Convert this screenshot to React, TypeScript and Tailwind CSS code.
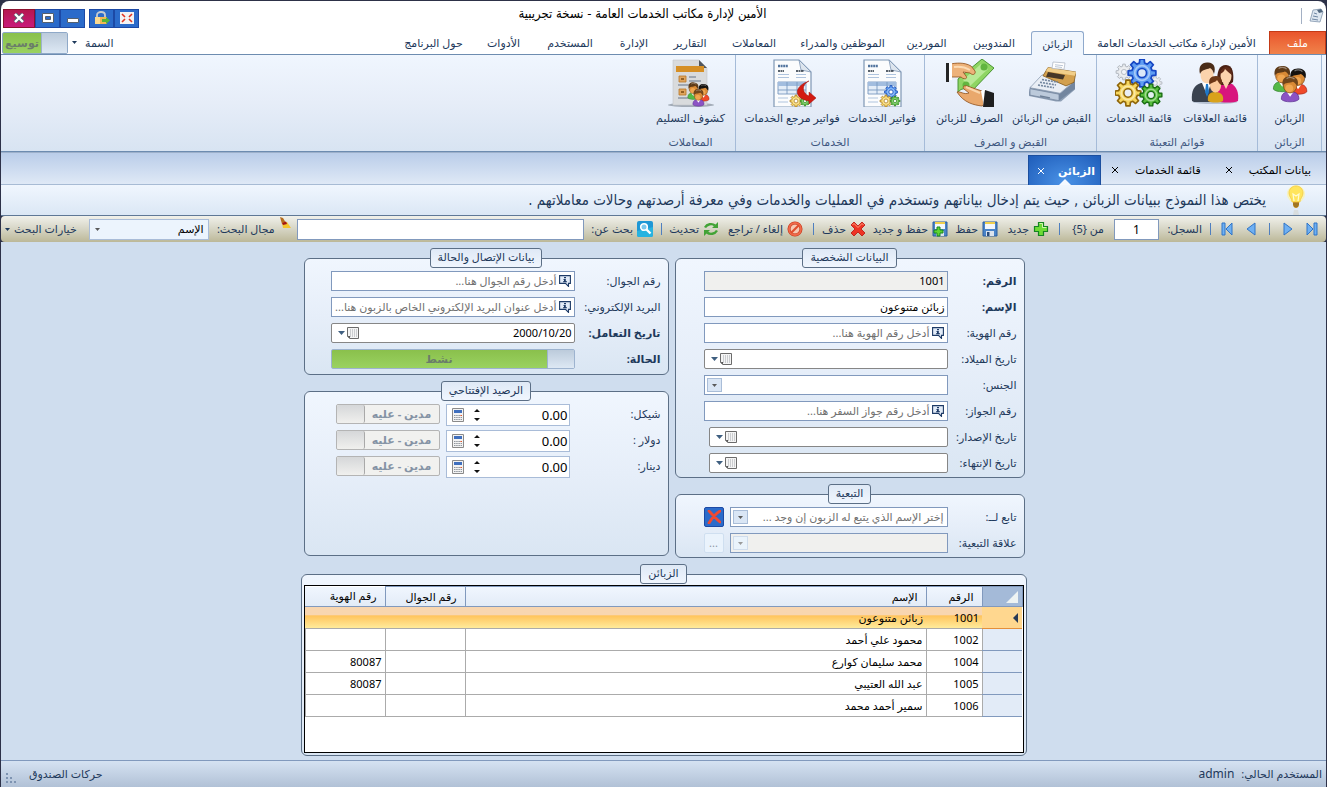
import { useState } from 'react';
import type { ReactNode } from 'react';

// --- Interfaces ---
interface RibbonTab {
  label: string;
  width: string;
}

interface RibbonAction {
  label: string;
  width: string;
  icon: ReactNode;
}

interface RibbonGroup {
  title: string;
  width: string;
  actions: RibbonAction[];
}

interface Customer {
  id: string;
  name: string;
  mobile: string;
  identity: string;
}

// --- Data ---
const ribbonTabs: RibbonTab[] = [
  { label: 'الأمين لإدارة مكاتب الخدمات العامة', width: 'w-[185px]' },
  { label: 'الزبائن', width: 'w-[53px]' },
  { label: 'المندوبين', width: 'w-[74px]' },
  { label: 'الموردين', width: 'w-[61px]' },
  { label: 'الموظفين والمدراء', width: 'w-[107px]' },
  { label: 'المعاملات', width: 'w-[70px]' },
  { label: 'التقارير', width: 'w-[58px]' },
  { label: 'الإدارة', width: 'w-[54px]' },
  { label: 'المستخدم', width: 'w-[74px]' },
  { label: 'الأدوات', width: 'w-[59px]' },
  { label: 'حول البرنامج', width: 'w-[81px]' },
];

const customers: Customer[] = [
  { id: '1001', name: 'زبائن متنوعون', mobile: '', identity: '' },
  { id: '1002', name: 'محمود علي أحمد', mobile: '', identity: '' },
  { id: '1004', name: 'محمد سليمان كوارع', mobile: '', identity: '80087' },
  { id: '1005', name: 'عبد الله العتيبي', mobile: '', identity: '80087' },
  { id: '1006', name: 'سمير أحمد محمد', mobile: '', identity: '' },
];

// --- Icons ---
const gearPath = (cx: number, cy: number, r: number, teeth: number) => {
  const step = (Math.PI * 2) / teeth;
  const points: string[] = [];
  for (let i = 0; i < teeth; i++) {
    const a = i * step;
    [
      [-0.32, 0.74],
      [-0.2, 1],
      [0.2, 1],
      [0.32, 0.74],
    ].forEach(([offset, scale]) => {
      const t = a + offset * step;
      points.push(`${(cx + Math.cos(t) * r * scale).toFixed(2)} ${(cy + Math.sin(t) * r * scale).toFixed(2)}`);
    });
  }
  return `M${points.join('L')}Z`;
};

const Gear = ({ cx, cy, r, fill, stroke, hole }: { cx: number; cy: number; r: number; fill: string; stroke: string; hole: string }) => (
  <g>
    <path d={gearPath(cx, cy, r, 8)} fill={fill} stroke={stroke} strokeWidth={r / 8} strokeLinejoin="round" />
    <circle cx={cx} cy={cy} r={r * 0.52} fill="none" stroke="#fff" strokeOpacity="0.45" strokeWidth={r / 8} />
    <circle cx={cx} cy={cy} r={r * 0.32} fill={hole} stroke={stroke} strokeWidth={r / 9} />
  </g>
);

const Person = ({ x, y, hair, shirt, shade }: { x: number; y: number; hair: string; shirt: string; shade: string }) => (
  <g transform={`translate(${x} ${y})`}>
    <path d="M-10 20C-10 13-6 11 0 11S10 13 10 20C7 24-7 24-10 20Z" fill={shirt} stroke={shade} strokeWidth="0.8" />
    <path d="M-4 11L0 17L4 11Z" fill="#fff" />
    <ellipse cx="0" cy="4" rx="7.5" ry="8.5" fill="#d98a35" stroke="#7a4310" strokeWidth="0.8" />
    <ellipse cx="-1" cy="7" rx="4.5" ry="4.5" fill="#f0a650" />
    <path d="M-8.500 4C-10-5-5-8 1-7.500C8-7 10-2 8.500 4C6 2 5-1 3-1C0 1-6-1-8.500 4Z" fill={hair} />
    <path d="M-4-4.500C-2-6.500 3-6.500 5-4" stroke="#fff" strokeOpacity="0.4" strokeWidth="1.400" fill="none" />
  </g>
);

const People = () => (
  <g>
    <Person x={15} y={10} hair="#5e3a17" shirt="#55b947" shade="#2d7d26" />
    <Person x={33} y={13} hair="#15120f" shirt="#f04a2a" shade="#a31c0b" />
    <Person x={24} y={22} hair="#71461b" shirt="#8c53c4" shade="#54288a" />
  </g>
);

const PeopleIcon = () => (
  <svg viewBox="0 0 48 48" className="size-12">
    <g transform="translate(3 5) scale(.88 .84)"><People /></g>
  </svg>
);

const FamilyIcon = () => (
  <svg viewBox="0 0 48 48" className="size-12">
    <ellipse cx="24" cy="43" rx="22" ry="2" fill="#8797ab" opacity=".5" />
    <path d="M1 42C0 32 3 26 10 24L22 24C27 27 27 34 26 43L3 43Z" fill="#3a4350" />
    <path d="M11 24L16 36L20 24Z" fill="#fff" />
    <path d="M15 25L14 33L16 38L18 33L17 25Z" fill="#1d78c9" />
    <path d="M26 42C25 32 28 26 34 24L39 24C46 27 48 34 47 42C43 44 30 44 26 42Z" fill="#d8157d" />
    <path d="M26 24C26 12 28 6 35 6C42 6 43 15 42 23L38 26L30 26Z" fill="#4a2013" />
    <ellipse cx="16" cy="16" rx="6.500" ry="8.500" fill="#fbd3ac" />
    <path d="M9 15C7 7 11 3 17 3.500C23 4 25 8 23 15C22 12 21 10 19 9C15 11 11 10 9 15Z" fill="#4a2c17" />
    <ellipse cx="35" cy="17" rx="5.500" ry="8" fill="#fbd3ac" />
    <path d="M29 15C30 9 34 8 35 8C39 8 41 11 41 16C38 14 36 12 34 10C33 13 31 14 29 15Z" fill="#5f2b18" />
    <path d="M32 24L35 30L38 24Z" fill="#fbd3ac" />
    <path d="M17 42C16 36 19 33 24 33C30 33 33 36 32 42C28 44 21 44 17 42Z" fill="#d9a21b" />
    <ellipse cx="24.500" cy="27" rx="5.500" ry="6.500" fill="#fbcb9c" />
    <path d="M18.500 26C17 20 20 17 25 17C30 17 32 21 30.500 26C28 25 27 22 26 21C24 24 20 23 18.500 26Z" fill="#6b3716" />
  </svg>
);

const GearsIcon = () => (
  <svg viewBox="0 0 48 48" className="size-12">
    <Gear cx={9} cy={13} r={8} fill="#e5e8ec" stroke="#b3b9c1" hole="#f2f5fa" />
    <Gear cx={40} cy={24} r={7} fill="#e5e8ec" stroke="#b3b9c1" hole="#f2f5fa" />
    <Gear cx={27} cy={14} r={14} fill="#5f9df2" stroke="#1747c4" hole="#dbe8f8" />
    <Gear cx={13} cy={34} r={13} fill="#f6d660" stroke="#8f6508" hole="#e9eef5" />
    <Gear cx={36} cy={36} r={11} fill="#57bd3c" stroke="#196d12" hole="#e3eef0" />
  </svg>
);

const RegisterIcon = () => (
  <svg viewBox="0 0 48 48" className="size-12">
    <g transform="translate(0 3) scale(1 .92)">
      <path d="M1 33L2 27L33 34L47 20V30L33 43L28 43L1 37Z" fill="#8e9fb5" />
      <path d="M2 29L31 35V42L2 36Z" fill="#bccadb" stroke="#6d7f98" strokeWidth=".7" />
      <path d="M31 35L47 21V29L31 42Z" fill="#73869f" />
      <path d="M2 28L14 14L47 20L32 34Z" fill="#e9eef5" stroke="#7c8da5" strokeWidth=".7" />
      <path d="M15 15L20 6L48 11L46 22L38 26Z" fill="#d3a04e" stroke="#805719" strokeWidth=".8" />
      <path d="M20 6L48 11L47 15L18 10Z" fill="#f1ce89" />
      <path d="M20 11L37 14L35 19L18 16Z" fill="#463727" />
      <path d="M25 0L37 1L36 8L24 7Z" fill="#fff" stroke="#a5afbd" strokeWidth=".7" />
      <path d="M27 3L35 4M27 5L34 6" stroke="#a8b6ca" strokeWidth=".8" />
      <path d="M14 19L30 22M12 22L28 25M10 25L26 28" stroke="#74879f" strokeWidth="1.800" strokeDasharray="2 1" />
      <path d="M12 37L22 39" stroke="#6e8097" strokeWidth="1.500" />
    </g>
  </svg>
);

const HandMoneyIcon = () => (
  <svg viewBox="0 0 48 48" className="size-12">
    <path d="M12 20L36 0L48 9L24 34Q18 26 12 33Z" fill="#8fd563" stroke="#3d8c26" strokeWidth=".9" />
    <path d="M17 21L35 5L42 10L24 27Z" fill="#b8e996" />
    <circle cx="20" cy="26" r="3.500" fill="#62b53f" />
    <circle cx="38" cy="8" r="3.500" fill="#62b53f" />
    <path d="M4 5C10 4 18 3 25 7L29 12C30 15 27 17 24 14L17 13L20 17C22 20 18 21 15 18L4 18Z" fill="#edb27a" stroke="#8e501d" strokeWidth=".8" />
    <path d="M8 8C15 7 19 8 24 11" stroke="#fbdbb4" strokeWidth="2" fill="none" />
    <path d="M0 4H3V23H0Z" fill="#252525" />
    <path d="M3 4H6V21H3Z" fill="#fff" />
    <path d="M11 33C14 32 18 36 23 34L18 30C16 28 18 26 21 27L36 32L42 43L36 47C28 46 18 44 11 33Z" fill="#e9a86c" stroke="#8e501d" strokeWidth=".8" />
    <path d="M20 28L34 34" stroke="#f9d5ab" strokeWidth="2" />
    <path d="M35 32L40 30L44 46L38 48Z" fill="#fff" />
    <path d="M39 31L48 34V48H37Z" fill="#1f1f1f" />
  </svg>
);

const InvoiceSheet = () => (
  <g>
    <path d="M6 1H31L43 13V48H6Z" fill="#fbfcfd" stroke="#7f97b5" strokeWidth="1.200" />
    <path d="M31 1L33 11L43 13Z" fill="#dde5ee" stroke="#7f97b5" strokeWidth=".8" />
    <path d="M10 7H20" stroke="#52749e" strokeWidth="2.400" strokeDasharray="2 .6" />
    <path d="M10 12H16M28 12H36" stroke="#26303d" strokeWidth="1.600" strokeDasharray="2 .5" />
    <path d="M10 15.500H21M28 15.500H38M10 18.500H21M28 18.500H38" stroke="#afc4de" />
    <path d="M10 23H38V35H10Z" fill="#e4edf8" stroke="#7898c0" strokeWidth=".9" />
    <path d="M10 23H38V27H10Z" fill="#a2bddf" />
    <path d="M10 31H38M19 23V35M29 23V35" stroke="#7898c0" strokeWidth=".9" />
    <path d="M10 39H20M10 43H20" stroke="#afc4de" />
  </g>
);

const InvoiceIcon = () => (
  <svg viewBox="0 0 48 48" className="size-12">
    <InvoiceSheet />
    <Gear cx={33} cy={33} r={6.5} fill="#5f9df2" stroke="#1c4fb5" hole="#fff" />
    <Gear cx={28} cy={42} r={6} fill="#f4d467" stroke="#a1731a" hole="#fff" />
    <Gear cx={37} cy={42} r={5} fill="#5fc042" stroke="#22751a" hole="#fff" />
  </svg>
);

const InvoiceReturnIcon = () => (
  <svg viewBox="0 0 48 48" className="size-12">
    <InvoiceSheet />
    <Gear cx={28} cy={42} r={6} fill="#f4d467" stroke="#a1731a" hole="#fff" />
    <Gear cx={37} cy={42} r={5} fill="#5fc042" stroke="#22751a" hole="#fff" />
    <path d="M41 22C33 26 34 34 41 37L41 33L48 39L41 45L41 42C27 40 24 28 41 22Z" fill="#d31b12" stroke="#9c0f08" strokeWidth=".5" />
  </svg>
);

const DeliveryIcon = () => (
  <svg viewBox="0 0 48 48" className="size-12">
    <ellipse cx="24" cy="46" rx="23" ry="2" fill="#76808c" opacity=".6" />
    <path d="M6 1H32L40 9V46H6Z" fill="#d9dbdd" stroke="#c3c7cb" strokeWidth=".6" />
    <path d="M32 1L40 9H32Z" fill="#51565c" />
    <path d="M9 7H37V13H9Z" fill="#d68f25" />
    <path d="M12 17H19V23H12ZM12 30H19V36H12Z" fill="#e0a55e" stroke="#b97627" strokeWidth=".8" />
    <path d="M14 20H17M14 33H17" stroke="#7a4a12" strokeWidth="1.500" />
    <path d="M22 18H29M22 22H34M11 26H24M22 31H30M11 39H26" stroke="#8c97a4" strokeWidth="1.300" />
    <g transform="translate(18 22) scale(.56)"><People /></g>
  </svg>
);

const BulbIcon = () => (
  <svg viewBox="0 0 20 30" className="h-[30px] w-5 shrink-0">
    <circle cx="10" cy="9" r="9" fill="#fff3a0" opacity=".7" />
    <path d="M6 17C6 13 3 12 3 8C3 4 6 1 10 1S17 4 17 8C17 12 14 13 14 17Z" fill="#ffe55c" stroke="#f0c63c" strokeWidth=".7" />
    <path d="M8 16L7 9L10 11L13 9L12 16" fill="none" stroke="#fffbd5" strokeWidth="1.200" />
    <path d="M7 17H13V21L11 23H9L7 21Z" fill="#c7932c" />
    <path d="M7 19H13M8 21H12" stroke="#7a5a1e" />
    <path d="M8 25H12L13 30H7Z" fill="#d7d9d8" opacity=".8" />
  </svg>
);

const NavIcon = ({ kind }: { kind: 'last' | 'next' | 'prev' | 'first' }) => (
  <svg viewBox="0 0 12 14" className="h-3.5 w-3" fill="#6fb0f2" stroke="#2f74c8" strokeLinejoin="round">
    {kind === 'last' && <path d="M1 1L7 7L1 13ZM8 1H11V13H8Z" />}
    {kind === 'next' && <path d="M2 1L10 7L2 13Z" />}
    {kind === 'prev' && <path d="M10 1L2 7L10 13Z" />}
    {kind === 'first' && <path d="M11 1L5 7L11 13ZM1 1H4V13H1Z" />}
  </svg>
);

const PlusIcon = () => (
  <svg viewBox="0 0 16 16" className="size-4">
    <path d="M5.500 1.500H10.500V5.500H14.500V10.500H10.500V14.500H5.500V10.500H1.500V5.500H5.500Z" fill="#6edb35" stroke="#168522" strokeWidth="1.200" />
    <path d="M6.500 2.500H9.500V6.500H13.500" fill="none" stroke="#cff7ac" />
  </svg>
);

const SaveIcon = ({ withPlus = false }: { withPlus?: boolean }) => (
  <svg viewBox="0 0 16 16" className="size-4">
    <path d="M1 1H15V15H1Z" fill="#4a84c8" stroke="#2d5f9f" />
    <path d="M3 1H13V8H3Z" fill="#f4f7fb" />
    <path d="M3 1H13V3H3Z" fill="#f0cf4c" />
    <path d="M4 10H12V15H4Z" fill="#dce4ee" />
    <path d="M5 11H7.500V15H5Z" fill="#2b4c7a" />
    {withPlus && <path d="M4 6H7V9H10V12H7V15H4V12H1V9H4Z" fill="#5fd430" stroke="#168522" transform="translate(1 0)" />}
  </svg>
);

const DeleteIcon = () => (
  <svg viewBox="0 0 16 16" className="size-4">
    <path d="M1 4L4 1L8 5L12 1L15 4L11 8L15 12L12 15L8 11L4 15L1 12L5 8Z" fill="#ee3424" stroke="#b8140b" strokeWidth=".8" />
    <path d="M2.500 4L4 2.500L8 6.500L12 2.500L13.500 4" stroke="#ff9d7c" fill="none" />
  </svg>
);

const CancelIcon = () => (
  <svg viewBox="0 0 16 16" className="size-4">
    <circle cx="8" cy="8" r="6" fill="#f6c9b4" stroke="#c23516" strokeWidth="3" />
    <circle cx="8" cy="8" r="6" fill="none" stroke="#f0694a" strokeWidth="1.800" />
    <path d="M4 12L12 4" stroke="#df4d2c" strokeWidth="2.200" />
  </svg>
);

const RefreshIcon = () => (
  <svg viewBox="0 0 16 16" className="size-4" fill="none" stroke="#42a336" strokeWidth="2.400">
    <path d="M2 6.500C4 3 9 2 12 4.500" />
    <path d="M14 9.500C12 13 7 14 4 11.500" />
    <path d="M15 1V7H9ZM1 15V9H7Z" fill="#42a336" stroke="none" />
  </svg>
);

const SearchIcon = () => (
  <svg viewBox="0 0 16 16" className="size-4">
    <rect width="16" height="16" rx="2" fill="#1e97d5" />
    <path d="M0 10L16 6V14A2 2 0 0 1 14 16H2A2 2 0 0 1 0 14Z" fill="#27b3e0" />
    <circle cx="7" cy="6" r="3.300" fill="#7cc8ec" stroke="#fff" strokeWidth="1.600" />
    <path d="M9.500 8.500L13.500 12.500" stroke="#fff" strokeWidth="2.400" />
  </svg>
);

const BroomIcon = () => (
  <svg viewBox="0 0 12 12" className="size-3">
    <path d="M1 0L4 1L7 6L3 7Z" fill="#b56c1f" />
    <path d="M3 6L8 5L12 11L4 11Z" fill="#f4c62d" />
    <path d="M3 6L7 4.500L8 7L4 8Z" fill="#a31414" />
  </svg>
);

const InfoIcon = () => (
  <svg viewBox="0 0 12 12" className="size-3 shrink-0">
    <path d="M.6.6H11.400V8.400H9.500V11.400L6.500 8.400H.6Z" fill="#e3ecf8" stroke="#1d3a66" strokeWidth="1.100" />
    <path d="M5 2H7V3.200H5ZM4.500 4H6.800V6.200H8V7.200H4V6.200H5V5H4.500Z" fill="#1d3a66" />
  </svg>
);

const CalendarIcon = () => (
  <svg viewBox="0 0 12 12" className="size-3">
    <path d="M1 .5H11.500V11.500H3L.5 9.500V.5Z" fill="#f4f4f4" stroke="#6b6b6b" />
    <path d="M3.500 2.500V10M5.500 2.500V10M7.500 2.500V10M9.500 2.500V10" stroke="#a3a7ac" strokeDasharray="1 1" />
    <path d="M.5 9H3V11.500Z" fill="#555" />
  </svg>
);

const CalculatorIcon = () => (
  <svg viewBox="0 0 12 14" className="h-3.5 w-3">
    <path d="M.5.5H11.500V13.500H.5Z" fill="#f3f3f3" stroke="#8a8a8a" />
    <path d="M2 2H10V5H2Z" fill="#3f6fbe" />
    <path d="M2 7.500H10M2 9.500H10M2 11.500H10" stroke="#8f959c" strokeDasharray="1.500 .7" />
    <path d="M8.500 7H10V8H8.500Z" fill="#e4572a" />
  </svg>
);

const Caret = ({ color = '#3c4a5e' }: { color?: string }) => (
  <svg viewBox="0 0 7 4" className="h-1 w-[7px] shrink-0"><path d="M0 0H7L3.500 4Z" fill={color} /></svg>
);

const SmallCaret = ({ color }: { color: string }) => (
  <svg viewBox="0 0 5 3" className="h-[3px] w-[5px] shrink-0"><path d="M0 0H5L2.500 3Z" fill={color} /></svg>
);

const CloseMark = () => (
  <svg viewBox="0 0 8 8" className="size-2" stroke="currentColor"><path d="M1 1L7 7M7 1L1 7" /></svg>
);

const ribbonGroups: RibbonGroup[] = [
  {
    title: 'الزبائن',
    width: 'w-[65px]',
    actions: [{ label: 'الزبائن', width: 'w-[60px]', icon: <PeopleIcon /> }],
  },
  {
    title: 'قوائم التعبئة',
    width: 'w-[161px]',
    actions: [
      { label: 'قائمة العلاقات', width: 'w-[76px]', icon: <FamilyIcon /> },
      { label: 'قائمة الخدمات', width: 'w-[76px]', icon: <GearsIcon /> },
    ],
  },
  {
    title: 'القبض و الصرف',
    width: 'w-[172px]',
    actions: [
      { label: 'القبض من الزبائن', width: 'w-[82px]', icon: <RegisterIcon /> },
      { label: 'الصرف للزبائن', width: 'w-[82px]', icon: <HandMoneyIcon /> },
    ],
  },
  {
    title: 'الخدمات',
    width: 'w-[189px]',
    actions: [
      { label: 'فواتير الخدمات', width: 'w-[76px]', icon: <InvoiceIcon /> },
      { label: 'فواتير مرجع الخدمات', width: 'w-[104px]', icon: <InvoiceReturnIcon /> },
    ],
  },
  {
    title: 'المعاملات',
    width: 'w-[89px]',
    actions: [{ label: 'كشوف التسليم', width: 'w-[80px]', icon: <DeliveryIcon /> }],
  },
];

// --- Form pieces ---
const Panel = ({ title, className = '', children }: { title: string; className?: string; children: ReactNode }) => (
  <fieldset className={`min-w-0 rounded-md border border-[#5c6f86] bg-linear-to-b from-[#f0f6fe] via-[#e6eef9] to-[#dae6f3] ${className}`}>
    <legend className="mx-auto h-5 rounded-[3px] border border-[#5c6f86] bg-linear-to-b from-[#dfe9f6] to-[#f0f6fe] px-[7px] leading-4">
      {title}
    </legend>
    {children}
  </fieldset>
);

const Row = ({ id, label, bold = false, labelWidth = 'w-[69px]', children }: { id: string; label: string; bold?: boolean; labelWidth?: string; children: ReactNode }) => (
  <div className="flex items-center">
    <label htmlFor={id} className={`shrink-0 whitespace-nowrap ${labelWidth} ${bold ? 'font-bold' : ''}`}>{label}</label>
    {children}
  </div>
);

const TextField = ({ id, value, placeholder, readOnly = false }: { id: string; value?: string; placeholder?: string; readOnly?: boolean }) => (
  <div className={`flex h-5 w-[244px] items-center gap-0.5 border border-[#8199bd] px-0.5 ${readOnly ? 'bg-[#f0f0ee]' : 'bg-white'} ${placeholder ? 'pr-[3px]' : ''}`}>
    {placeholder && <InfoIcon />}
    <input
      id={id}
      type="text"
      readOnly={readOnly}
      defaultValue={value}
      placeholder={placeholder}
      className="w-full min-w-0 bg-transparent text-black outline-none placeholder:text-[#707070]"
    />
  </div>
);

const DateField = ({ id, value, width = 'w-[244px]' }: { id: string; value?: string; width?: string }) => (
  <div className={`flex h-5 items-center rounded-xs border border-[#868686] bg-white pr-0.5 pl-1.5 ${width}`}>
    <input id={id} type="text" defaultValue={value} className="w-full min-w-0 bg-transparent text-black outline-none" />
    <button type="button" aria-label="التقويم" className="flex items-center gap-0.5">
      <CalendarIcon />
      <Caret color="#3f5f80" />
    </button>
  </div>
);

const ComboField = ({ id, option = '', width, disabled = false }: { id: string; option?: string; width: string; disabled?: boolean }) => (
  <div className={`relative border border-[#8199bd] ${disabled ? 'bg-[#f0f0ee]' : 'bg-white'} ${width}`}>
    <select id={id} disabled={disabled} className="block h-[18px] w-full appearance-none pr-[3px] text-[#707070] outline-none">
      <option>{option}</option>
    </select>
    <span className={`pointer-events-none absolute inset-y-0.5 left-0.5 flex w-[15px] items-center justify-center border ${disabled ? 'border-[#cfdcec] bg-[#eaf3fb]' : 'border-[#a9bdd8] bg-[#dae6f5]'}`}>
      <SmallCaret color={disabled ? '#9a9a9a' : '#5a5a5a'} />
    </span>
  </div>
);

const BalanceRow = ({ id, label }: { id: string; label: string }) => (
  <div className="flex h-[26px] items-start">
    <label htmlFor={id} className="w-[91px] shrink-0 leading-5">{label}</label>
    <div className="flex h-[22px] w-[124px] items-center border border-[#a9bcd8] bg-white pr-px pl-[5px]">
      <input id={id} type="text" defaultValue="0.00" className="w-full min-w-0 bg-transparent text-[13px] text-black outline-none" />
      <button type="button" aria-label="تغيير القيمة" className="ml-2.5 shrink-0">
        <svg viewBox="0 0 6 12" className="h-3 w-1.5"><path d="M3 0L6 3H0ZM3 12L6 9H0Z" fill="#111" /></svg>
      </button>
      <button type="button" aria-label="الآلة الحاسبة" className="shrink-0"><CalculatorIcon /></button>
    </div>
    <label className="mr-1.5 flex h-5 w-[104px] items-center rounded-xs border border-[#b4b4b4] bg-[#f1f1ef] font-bold text-[#8593a5]">
      <span className="flex-1 text-center">مدين - عليه</span>
      <input type="checkbox" className="h-[18px] w-7 appearance-none rounded-xs border-r border-[#a9a9a9] bg-linear-to-b from-[#d5d7d9] to-[#f0f0ee]" />
    </label>
  </div>
);

const Divider = () => <span className="h-3 w-px shrink-0 bg-[#4f7fbf]" />;

const ToolButton = ({ icon, label, width }: { icon: ReactNode; label: string; width: string }) => (
  <button type="button" className={`flex shrink-0 items-center gap-1 whitespace-nowrap ${width}`}>
    <span className="shrink-0">{icon}</span>
    {label}
  </button>
);

// --- Page sections ---
const TitleBar = () => (
  <header className="grid h-[30px] grid-cols-[1fr_auto_1fr] items-center text-black">
    <div className="flex items-center gap-1.5 pr-0.5">
      <svg viewBox="0 0 16 16" className="size-4">
        <path d="M5 2L13 1L15 4L12 14L2 13Z" fill="#dde6f0" stroke="#8295ad" strokeWidth=".8" />
        <path d="M9 2L13 1L15 4L11 5Z" fill="#51677f" />
        <path d="M6 5L9 6M5 8L10 9M4 11L10 12" stroke="#6f86a3" />
      </svg>
      <span className="h-4 w-px bg-[#a3b0c4]" />
    </div>
    <h1 className="pr-[42px] pb-1 font-['DejaVu_Sans_Condensed','DejaVu_Sans',sans-serif] text-[13px]">الأمين لإدارة مكاتب الخدمات العامة - نسخة تجريبية</h1>
    <div className="flex items-center justify-end gap-1 pt-1 pl-0.5">
      <div className="flex">
        <button type="button" aria-label="ملء الشاشة" className="flex h-[19px] w-[25px] items-center justify-center border border-[#1c49a5] bg-[#2b6bca]">
          <svg viewBox="0 0 14 12" className="h-3 w-3.5">
            <path d="M0 0H14V12H0Z" fill="#f3f3f3" />
            <path d="M2 2L5 5M12 2L9 5M2 10L5 7M12 10L9 7" stroke="#e0341f" strokeWidth="1.600" />
          </svg>
        </button>
        <button type="button" aria-label="قفل" className="flex h-[19px] w-[25px] items-center justify-center border border-[#1c49a5] bg-[#2b6bca]">
          <svg viewBox="0 0 16 14" className="h-3.5 w-4">
            <path d="M3 7V4C3 0 11 0 11 4V7" fill="none" stroke="#c5ccd2" strokeWidth="1.800" />
            <path d="M1 6H13V13H1Z" fill="#f0b754" />
            <path d="M1 6H6V13H1Z" fill="#fbd98f" />
            <path d="M8 8H12V6L16 9.500L12 13V11H8Z" fill="#53b33a" />
          </svg>
        </button>
      </div>
      <div className="flex">
        <button type="button" aria-label="تصغير" className="flex h-[19px] w-[25px] items-center justify-center border border-[#1c49a5] bg-[#2b6bca]">
          <svg viewBox="0 0 12 10" className="h-2.5 w-3"><path d="M.5 5.500H11.500V9.500H.5Z" fill="#fff" stroke="#54606e" /></svg>
        </button>
        <button type="button" aria-label="تكبير" className="flex h-[19px] w-[25px] items-center justify-center border border-[#1c49a5] bg-[#2b6bca]">
          <svg viewBox="0 0 12 10" className="h-2.5 w-3">
            <path d="M.5.5H11.500V9.500H.5Z" fill="#fff" stroke="#54606e" />
            <path d="M3.500 3.500H8.500V6.500H3.500Z" fill="#2b6bca" stroke="#54606e" />
          </svg>
        </button>
        <button type="button" aria-label="إغلاق" className="flex h-[19px] w-8 items-center justify-center border border-[#8c1130] bg-linear-to-b from-[#b5164f] to-[#c81a7b]">
          <svg viewBox="0 0 12 10" className="h-2.5 w-3">
            <path d="M2 1L10 9M10 1L2 9" stroke="#54606e" strokeWidth="4" />
            <path d="M2 1L10 9M10 1L2 9" stroke="#fff" strokeWidth="2.400" />
          </svg>
        </button>
      </div>
    </div>
  </header>
);

const RibbonTabs = () => {
  const [active, setActive] = useState('الزبائن');

  return (
    <nav className="flex h-6 items-stretch border-b border-[#6d8cb0]">
      <button type="button" className="w-[57px] shrink-0 border-t border-r border-l border-[#c43a16] bg-linear-to-b from-[#e9542c] to-[#f0824a] text-white">ملف</button>
      {ribbonTabs.map((tab) => (
        <button
          key={tab.label}
          type="button"
          onClick={() => setActive(tab.label)}
          className={`shrink-0 whitespace-nowrap ${tab.width} ${
            tab.label === active ? '-mb-px rounded-t-[3px] border border-b-0 border-[#8fa9cc] bg-[#f0f6fd]' : ''
          }`}
        >
          {tab.label}
        </button>
      ))}
      <div className="mr-auto flex items-center gap-1 pl-px">
        <button type="button" className="flex items-center gap-2">
          السمة
          <SmallCaret color="#1e395b" />
        </button>
        <label className="flex h-[22px] w-[66px] items-center rounded-xs border border-[#8fa9c8] bg-linear-to-b from-[#8ac04c] to-[#9ad260] font-bold text-[#6b7d6a]">
          <input type="checkbox" defaultChecked className="h-5 w-[26px] shrink-0 appearance-none border-l border-[#9db3cf] bg-linear-to-b from-[#bccbdb] to-[#dde8f4]" />
          <span className="flex-1 text-center">توسيع</span>
        </label>
      </div>
    </nav>
  );
};

const Ribbon = () => (
  <div className="flex h-[97px] items-stretch border-b border-[#6d8cb0] bg-linear-to-b from-[#f0f6fe] via-[#e6edf8] to-[#d8e4f2] pr-1">
    {ribbonGroups.map((group, index) => (
      <section
        key={group.title}
        className={`flex shrink-0 flex-col items-center justify-between pt-1 pb-px ${group.width} ${
          index < ribbonGroups.length - 1 ? 'border-l border-[#a5bbd8]' : ''
        } ${index === 0 ? 'border-r border-[#a5bbd8]' : ''}`}
      >
        <div className="flex">
          {group.actions.map((action) => (
            <button key={action.label} type="button" className={`flex flex-col items-center gap-[3px] whitespace-nowrap ${action.width}`}>
              {action.icon}
              {action.label}
            </button>
          ))}
        </div>
        <h2 className="text-[#3e5780]">{group.title}</h2>
      </section>
    ))}
  </div>
);

const DocumentTabs = () => (
  <div className="flex h-[33px] items-end border-t border-b border-t-[#9db0ca] border-b-[#a7bbd4] bg-linear-to-b from-[#bacde9] to-[#dfe9f6] pr-[5px] text-black">
    <div className="flex gap-1">
      {['بيانات المكتب', 'قائمة الخدمات'].map((title) => (
        <div key={title} className="flex h-[29px] items-center gap-4 pr-2.5 pl-2.5">
          <button type="button" className="whitespace-nowrap">{title}</button>
          <button type="button" aria-label="إغلاق"><CloseMark /></button>
        </div>
      ))}
    </div>
    <div className="relative -mb-px flex h-[30px] w-[73px] items-center justify-between border border-b-0 border-[#1c4f9f] bg-[radial-gradient(ellipse_at_50%_90%,#4a92e6,#1f5dba)] pr-[5px] pl-2 font-bold text-white">
      <button type="button" className="whitespace-nowrap">الزبائن</button>
      <button type="button" aria-label="إغلاق"><CloseMark /></button>
      <svg viewBox="0 0 12 6" className="absolute bottom-0 left-[30px] h-1.5 w-3"><path d="M6 0L12 6H0Z" fill="#f5f9ff" /></svg>
    </div>
  </div>
);

const Toolbar = () => (
  <div className="flex h-[26px] items-center rounded-sm bg-linear-to-b from-[#f1f1eb] via-[#d6d5c5] to-[#bcb898] pr-2 pl-1">
    <button type="button" aria-label="الأخير" className="w-6"><NavIcon kind="last" /></button>
    <button type="button" aria-label="التالي" className="w-6"><NavIcon kind="next" /></button>
    <Divider />
    <button type="button" aria-label="السابق" className="mr-3 w-6"><NavIcon kind="prev" /></button>
    <button type="button" aria-label="الأول" className="w-[22px]"><NavIcon kind="first" /></button>
    <Divider />
    <label htmlFor="record" className="mr-2 w-[43px] whitespace-nowrap">السجل:</label>
    <input id="record" type="text" defaultValue="1" className="h-[21px] w-[45px] border border-[#8199bd] bg-white text-center text-[12px] text-black outline-none" />
    <span className="mr-2.5 w-11 whitespace-nowrap">من {'{5}'}</span>
    <Divider />
    <div className="mr-2.5 flex">
      <ToolButton icon={<PlusIcon />} label="جديد" width="w-[51px]" />
      <ToolButton icon={<SaveIcon />} label="حفظ" width="w-[50px]" />
      <ToolButton icon={<SaveIcon withPlus />} label="حفظ و جديد" width="w-[82px]" />
      <ToolButton icon={<DeleteIcon />} label="حذف" width="w-[52px]" />
    </div>
    <Divider />
    <div className="mr-2.5 flex">
      <ToolButton icon={<CancelIcon />} label="إلغاء / تراجع" width="w-[84px]" />
      <ToolButton icon={<RefreshIcon />} label="تحديث" width="w-[57px]" />
    </div>
    <Divider />
    <label htmlFor="search" className="mr-2 flex w-[69px] shrink-0 items-center gap-1 whitespace-nowrap">
      <span className="shrink-0"><SearchIcon /></span>
      بحث عن:
    </label>
    <input id="search" type="text" className="h-[21px] min-w-0 flex-1 border border-[#8199bd] bg-white px-1 outline-none" />
    <button type="button" aria-label="مسح" className="mr-1.5 mb-3"><BroomIcon /></button>
    <label htmlFor="field" className="mr-1 w-[66px] shrink-0 whitespace-nowrap">مجال البحث:</label>
    <div className="relative">
      <select id="field" className="block h-[21px] w-[120px] appearance-none border border-[#a9bcd8] bg-[#ecf4fd] pr-1 text-black outline-none">
        <option>الإسم</option>
      </select>
      <span className="pointer-events-none absolute inset-y-0 left-1.5 flex items-center"><SmallCaret color="#5a5a5a" /></span>
    </div>
    <button type="button" className="mr-3 flex shrink-0 items-center gap-1 whitespace-nowrap">
      خيارات البحث
      <SmallCaret color="#1e395b" />
    </button>
  </div>
);

const CustomersTable = () => {
  const [selected, setSelected] = useState('1001');

  return (
    <div className="mx-0.5 mt-px mb-0.5 h-[168px] border border-black bg-white text-black">
      <table className="w-full table-fixed border-collapse">
        <thead>
          <tr className="h-5 bg-linear-to-b from-[#f0f6fe] to-[#e2ebf7]">
            <th className="w-10 border border-[#8199bd] bg-[#a4bad8] p-0">
              <svg viewBox="0 0 12 12" className="mr-1 size-3"><path d="M12 0V12H0Z" fill="#eef3f3" /></svg>
            </th>
            <th className="w-14 border border-[#8199bd] p-0 pr-2 text-right font-normal">الرقم</th>
            <th className="border border-[#8199bd] p-0 pr-2 text-right font-normal">الإسم</th>
            <th className="w-20 border border-[#8199bd] p-0 pr-2 text-right font-normal">رقم الجوال</th>
            <th className="w-20 border-b border-[#8199bd] p-0 pr-2 text-right font-normal">رقم الهوية</th>
          </tr>
        </thead>
        <tbody>
          {customers.map((row) => {
            const isSelected = row.id === selected;
            const cell = isSelected ? 'border-b border-[#ababab] p-0 pr-[3px]' : 'border border-[#ababab] p-0 pr-[3px]';
            return (
              <tr
                key={row.id}
                onClick={() => setSelected(row.id)}
                className={`h-[22px] ${isSelected ? 'bg-linear-to-b from-[#f8d6b0] from-35% via-[#ffc45c] via-40% to-[#ffee9f]' : ''}`}
              >
                <td className={`p-0 ${isSelected ? 'border-b border-[#e58f3a] bg-[#ffd78f]' : 'border-b border-[#8199bd] bg-[#e2ebf7]'}`}>
                  {isSelected && <svg viewBox="0 0 5 10" className="mr-1 h-2.5 w-[5px]"><path d="M5 0V10L0 5Z" fill="#283a56" /></svg>}
                </td>
                <td className={cell}>{row.id}</td>
                <td className={cell}>{row.name}</td>
                <td className={cell}>{row.mobile}</td>
                <td className={cell}>{row.identity}</td>
              </tr>
            );
          })}
        </tbody>
      </table>
    </div>
  );
};

// --- Main Component ---
export default function App() {
  return (
    <div dir="rtl" className="flex min-h-screen flex-col bg-[#2d3148] p-px font-['Noto_Sans','DejaVu_Sans',sans-serif] text-[11px] leading-4 text-[#1e395b]">
      <div className="rounded-t-lg bg-white">
        <TitleBar />
        <RibbonTabs />
      </div>
      <Ribbon />
      <DocumentTabs />

      <div className="flex h-[31px] items-center gap-5 border-b border-[#5f7896] bg-linear-to-b from-[#f0f6fe] to-[#dbe7f5] pr-5">
        <BulbIcon />
        <p className="font-['DejaVu_Sans_Condensed','DejaVu_Sans',sans-serif] text-[15px]">يختص هذا النموذج ببيانات الزبائن , حيث يتم إدخال بياناتهم وتستخدم في العمليات والخدمات وفي معرفة أرصدتهم وحالات معاملاتهم .</p>
      </div>

      <Toolbar />

      <main className="flex-1 bg-[#cfddee] pt-1.5 pb-1">
        <div className="mx-auto w-full max-w-[726px]">
          <div className="grid grid-cols-[350px_365px] gap-x-1.5 px-0.5">
            <div className="flex flex-col gap-1.5">
              <Panel title="البيانات الشخصية">
                <div className="flex flex-col gap-1.5 pt-[3px] pr-[7px] pb-1">
                  <Row id="number" label="الرقم:" bold><TextField id="number" value="1001" readOnly /></Row>
                  <Row id="name" label="الإسم:" bold><TextField id="name" value="زبائن متنوعون" /></Row>
                  <Row id="identity" label="رقم الهوية:"><TextField id="identity" placeholder="أدخل رقم الهوية هنا..." /></Row>
                  <Row id="birth" label="تاريخ الميلاد:"><DateField id="birth" /></Row>
                  <Row id="gender" label="الجنس:"><ComboField id="gender" width="w-[244px]" /></Row>
                  <Row id="passport" label="رقم الجواز:"><TextField id="passport" placeholder="أدخل رقم جواز السفر هنا..." /></Row>
                  <Row id="issued" label="تاريخ الإصدار:"><DateField id="issued" width="w-[239px]" /></Row>
                  <Row id="expires" label="تاريخ الإنتهاء:"><DateField id="expires" width="w-[239px]" /></Row>
                </div>
              </Panel>

              <Panel title="التبعية">
                <div className="flex flex-col gap-1.5 pt-[3px] pr-[7px] pb-1">
                  <Row id="parent" label="تابع لــ:">
                    <ComboField id="parent" width="w-[218px]" option="إختر الإسم الذي يتبع له الزبون إن وجد ..." />
                    <button type="button" aria-label="إزالة" className="mr-1.5 flex size-5 items-center justify-center rounded-xs border border-[#1c49a5] bg-[#2b6bca]">
                      <svg viewBox="0 0 14 14" className="size-3.5"><path d="M2 1C5 4 9 9 13 12M13 1C8 4 5 8 2 13" stroke="#ef4a32" strokeWidth="2.800" fill="none" strokeLinecap="round" /></svg>
                    </button>
                  </Row>
                  <Row id="relation" label="علاقة التبعية:">
                    <ComboField id="relation" width="w-[218px]" disabled />
                    <button type="button" disabled className="mr-1.5 size-5 rounded-xs border border-[#cfdff0] bg-[#eaf3fc] leading-3 text-[#8d97a5]">...</button>
                  </Row>
                </div>
              </Panel>
            </div>

            <div className="flex flex-col gap-1.5 pb-0.5">
              <Panel title="بيانات الإتصال والحالة">
                <div className="flex flex-col gap-1.5 pt-[3px] pr-[7px] pb-[5px]">
                  <Row id="mobile" label="رقم الجوال:" labelWidth="w-[86px]"><TextField id="mobile" placeholder="أدخل رقم الجوال هنا..." /></Row>
                  <Row id="email" label="البريد الإلكتروني:" labelWidth="w-[86px]"><TextField id="email" placeholder="أدخل عنوان البريد الإلكتروني الخاص بالزبون هنا..." /></Row>
                  <Row id="since" label="تاريخ التعامل:" bold labelWidth="w-[86px]"><DateField id="since" value="2000/10/20" /></Row>
                  <Row id="status" label="الحالة:" bold labelWidth="w-[86px]">
                    <div className="flex h-5 w-[244px] items-center rounded-xs border border-[#9db3cf] bg-linear-to-b from-[#8ac04c] to-[#9ad260]">
                      <input id="status" type="checkbox" defaultChecked className="h-[18px] w-[27px] appearance-none border-l border-[#9db3cf] bg-linear-to-b from-[#bccbdb] to-[#dde8f4]" />
                      <span className="flex-1 text-center font-bold text-[#6b7d6a]">نشط</span>
                    </div>
                  </Row>
                </div>
              </Panel>

              <Panel title="الرصيد الإفتتاحي" className="flex-1">
                <div className="pt-[3px] pr-[7px]">
                  <BalanceRow id="shekel" label="شيكل:" />
                  <BalanceRow id="dollar" label="دولار :" />
                  <BalanceRow id="dinar" label="دينار:" />
                </div>
              </Panel>
            </div>
          </div>

          <div className="mt-1.5">
            <Panel title="الزبائن">
              <CustomersTable />
            </Panel>
          </div>
        </div>
      </main>

      <footer className="flex h-[27px] items-center justify-between border-t border-[#8199bd] bg-linear-to-b from-[#d5e2f2] to-[#b1c1d6] pr-1 pl-1">
        <p>المستخدم الحالي: <span className="mr-1 text-[12px]">admin</span></p>
        <div className="flex items-center gap-3">
          <a href="#cash">حركات الصندوق</a>
          <svg viewBox="0 0 12 12" className="mt-2 size-3" fill="#7d93b1"><path d="M1 1H3V3H1ZM1 5H3V7H1ZM5 5H7V7H5ZM1 9H3V11H1ZM5 9H7V11H5ZM9 9H11V11H9Z" /></svg>
        </div>
      </footer>
    </div>
  );
}
